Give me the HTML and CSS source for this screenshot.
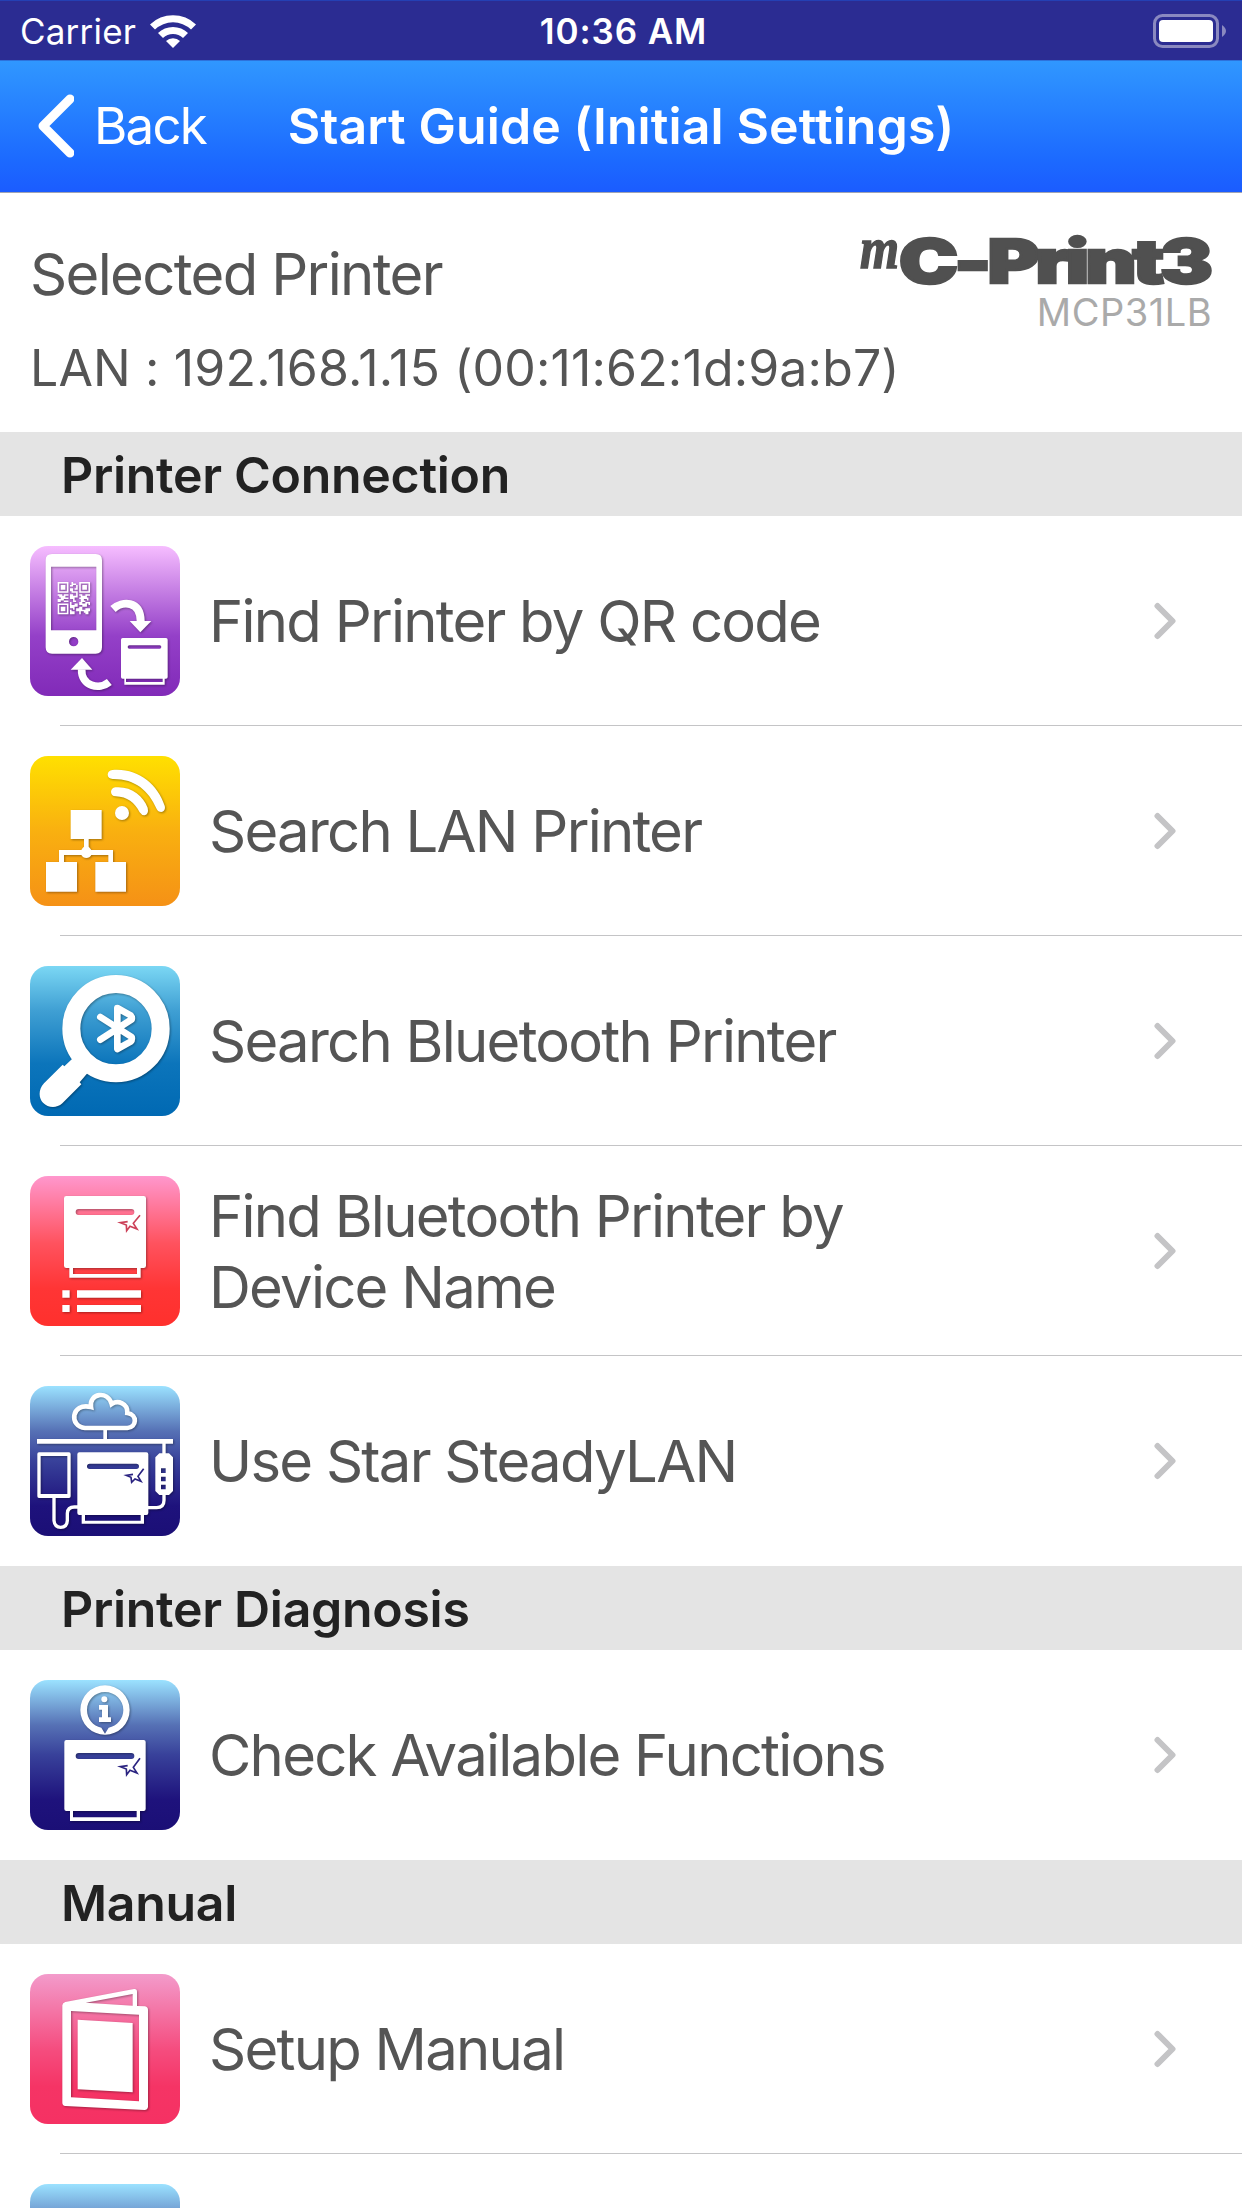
FILE: index.html
```html
<!DOCTYPE html>
<html lang="en">
<head>
    <meta charset="UTF-8">
    <meta name="viewport" content="width=device-width, initial-scale=1.0">
    <title>Start Guide (Initial Settings)</title>
    <link rel="stylesheet" href="styles.css">
</head>
<body>

<div class="statusbar">
    <div class="carrier">
        <span>Carrier</span>
        <svg class="wifi" viewBox="0 0 46 34">
            <path d="M0 10.500A33 33 0 0 1 46 10.500L41 15.500A26 26 0 0 0 5 15.500Z"/>
            <path d="M8 19A21.500 21.500 0 0 1 38 19L33 24A14.500 14.500 0 0 0 13 24Z"/>
            <path d="M16 27A10 10 0 0 1 30 27L23 34Z"/>
        </svg>
    </div>
    <div class="clock">10:36 AM</div>
    <div class="battery">
        <svg viewBox="0 0 74 34">
            <rect x="1.500" y="1.500" width="63" height="31" rx="8" fill="none" stroke="#8a89c0" stroke-width="3"/>
            <rect x="6" y="6" width="54" height="22" rx="4" fill="#fff"/>
            <path d="M69 11q4 3 4 6t-4 6z" fill="#8a89c0"/>
        </svg>
    </div>
</div>

<div class="navbar">
    <a class="back" href="#">
        <svg viewBox="0 0 36 64"><path d="M32 5L5 32L32 59"/></svg>
        <span>Back</span>
    </a>
    <h1>Start Guide (Initial Settings)</h1>
</div>

<div class="printer">
    <div class="printer-top">
        <div class="printer-title">Selected Printer</div>
        <div class="model">
            <svg class="logo" viewBox="0 0 352 50">
                <text class="logo-m" x="0" y="33" textLength="39" lengthAdjust="spacingAndGlyphs">m</text>
                <text class="logo-name" x="39" y="48" textLength="310" lengthAdjust="spacingAndGlyphs">C-Print3</text>
            </svg>
            <div class="model-name">MCP31LB</div>
        </div>
    </div>
    <div class="address">LAN : 192.168.1.15 (00:11:62:1d:9a:b7)</div>
</div>

<div class="section">
    <h2>Printer Connection</h2>
    <a class="row" href="#">
        <svg class="icon" viewBox="30 30 450 450">
            <defs>
                <linearGradient id="purple" x2="0" y2="1">
                    <stop offset="0" stop-color="#f6bdff"/>
                    <stop offset=".6" stop-color="#9440c8"/>
                    <stop offset="1" stop-color="#812ab8"/>
                </linearGradient>
            </defs>
            <rect x="30" y="30" width="450" height="450" rx="54" fill="url(#purple)"/>
            <g class="art">
                <path fill-rule="evenodd" d="M96 54H227Q246 54 246 73V334Q246 353 227 353H96Q77 353 77 334V73Q77 54 96 54ZM93 92V283H229V92ZM161 303A14 14 0 1 0 161 331A14 14 0 1 0 161 303Z"/>
                <g transform="translate(113 138) scale(4.620)">
                    <path fill-rule="evenodd" d="M0 0h7v7h-7zM1 1v5h5v-5zM2 2h3v3h-3zM14 0h7v7h-7zM15 1v5h5v-5zM16 2h3v3h-3zM0 14h7v7h-7zM1 15v5h5v-5zM2 16h3v3h-3z"/>
                    <path d="M9 0h1v1h2v1h-2v1h-2v-1h1zM12 2h1v3h-2v-1h1zM8 4h2v2h2v1h-3v-1h-1zM12 6h1v2h-1zM0 8h3v1h1v-1h3v1h-2v1h2v1h-3v1h3v1h-3v-1h-2v1h-2v-2h2v-1h-1v-1h-1zM8 8h2v1h2v-1h1v2h-2v2h1v1h-2v-2h-2zM14 8h2v1h2v-1h3v1h-2v1h1v2h-1v-1h-2v1h1v1h-3v-2h-1v-1h1v-1h-1zM8 13h1v2h2v-1h2v2h-2v2h-1v-1h-2zM14 13h2v1h2v-1h3v2h-1v-1h-1v2h-3v-1h-2zM12 17h2v-1h2v2h2v-1h3v2h-1v2h-2v-1h-1v-1h-2v2h-1v-2h-2zM8 18h1v1h2v2h-3z"/>
                </g>
                <path class="line" stroke-width="24" d="M279 219C306 195 361 192 362 255"/>
                <path d="M329 255H394L361 289Z"/>
                <path class="line" stroke-width="23" d="M268 438C238 463 183 450 185 400"/>
                <path d="M152 401H217L186 366Z"/>
                <path fill-rule="evenodd" d="M308 306H438Q443 306 443 311V423Q443 428 438 428H434V446H313V428H308Q303 428 303 423V311Q303 306 308 306ZM328 328A5 5 0 0 0 328 338H419A5 5 0 0 0 419 328ZM318 428V438H428V428Z"/>
            </g>
        </svg>
        <span class="label">Find Printer by QR code</span>
        <svg class="chevron" viewBox="0 0 22 38"><path d="M3.500 4L18.500 19L3.500 34"/></svg>
    </a>
    <a class="row" href="#">
        <svg class="icon" viewBox="30 30 450 450">
            <defs>
                <linearGradient id="yellow" x2="0" y2="1">
                    <stop offset="0" stop-color="#ffe000"/>
                    <stop offset=".5" stop-color="#f9b010"/>
                    <stop offset="1" stop-color="#f59116"/>
                </linearGradient>
            </defs>
            <rect x="30" y="30" width="450" height="450" rx="54" fill="url(#yellow)"/>
            <g class="art">
                <path d="M152 192H245V279H206V302Q211 307 214 312H279V348H318V437H226V348H265V327H214A17 17 0 0 1 184 327H132V348H171V437H78V348H117V312H184Q187 306 192 302V279H152Z"/>
                <circle cx="306" cy="201" r="21"/>
                <path d="M286 124C333 120 369 148 383 185Q387 204 374 208Q366 209 359 199C344 170 322 152 287 151Q273 149 273 137Q274 126 286 124Z"/>
                <path d="M277 72C352 65 413 114 434 179Q438 194 424 198Q414 198 410 189C386 133 344 98 278 99Q264 97 263 86Q264 74 277 72Z"/>
            </g>
        </svg>
        <span class="label">Search LAN Printer</span>
        <svg class="chevron" viewBox="0 0 22 38"><path d="M3.500 4L18.500 19L3.500 34"/></svg>
    </a>
    <a class="row" href="#">
        <svg class="icon" viewBox="30 30 450 450">
            <defs>
                <linearGradient id="sky" x2="0" y2="1">
                    <stop offset="0" stop-color="#7bd7f4"/>
                    <stop offset=".3" stop-color="#3f9fd3"/>
                    <stop offset=".65" stop-color="#0c75bb"/>
                    <stop offset="1" stop-color="#0069b3"/>
                </linearGradient>
            </defs>
            <rect x="30" y="30" width="450" height="450" rx="54" fill="url(#sky)"/>
            <g class="art">
                <circle class="line" cx="288" cy="218" r="134" stroke-width="54"/>
                <path d="M157 308L133 331L128 326L72 382C54 402 56 426 69 440C84 456 109 458 127 442L184 385L179 379L202 352Z"/>
                <path class="line round" stroke-width="20" d="M241 183L335 243Q337 252 332 257L292 279V156L332 178Q337 184 335 190L241 251"/>
            </g>
        </svg>
        <span class="label">Search Bluetooth Printer</span>
        <svg class="chevron" viewBox="0 0 22 38"><path d="M3.500 4L18.500 19L3.500 34"/></svg>
    </a>
    <a class="row" href="#">
        <svg class="icon" viewBox="30 30 450 450">
            <defs>
                <linearGradient id="red" x2="0" y2="1">
                    <stop offset="0" stop-color="#ff97cd"/>
                    <stop offset=".45" stop-color="#ff525e"/>
                    <stop offset=".75" stop-color="#ff3535"/>
                    <stop offset="1" stop-color="#ff302d"/>
                </linearGradient>
            </defs>
            <rect x="30" y="30" width="450" height="450" rx="54" fill="url(#red)"/>
            <g class="art">
                <path fill-rule="evenodd" d="M139 90H371Q378 90 378 97V299Q378 306 371 306H362V335H148V306H139Q132 306 132 299V97Q132 90 139 90ZM176 129A9 9 0 0 0 176 147H334A9 9 0 0 0 334 129ZM159 306V324H351V306Z"/>
                <path d="M127 373H149V395H127ZM171 373H363V395H171ZM127 417H149V438H127ZM171 417H363V438H171Z"/>
            </g>
            <path class="star" stroke="#cc4058" d="M323 167L301 170L319 177L320 194L330 181L351 189L340 172L360 148"/>
        </svg>
        <span class="label">Find Bluetooth Printer by Device Name</span>
        <svg class="chevron" viewBox="0 0 22 38"><path d="M3.500 4L18.500 19L3.500 34"/></svg>
    </a>
    <a class="row" href="#">
        <svg class="icon" viewBox="30 30 450 450">
            <defs>
                <linearGradient id="navy" x2="0" y2="1">
                    <stop offset="0" stop-color="#9be2ff"/>
                    <stop offset=".3" stop-color="#5671b5"/>
                    <stop offset=".5" stop-color="#38419a"/>
                    <stop offset=".8" stop-color="#1e127c"/>
                    <stop offset="1" stop-color="#1b0f76"/>
                </linearGradient>
            </defs>
            <rect x="30" y="30" width="450" height="450" rx="54" fill="url(#navy)"/>
            <g class="art">
                <path class="line" stroke-width="14" d="M195 156H322C350 154 354 116 322 111C324 82 294 72 275 84C264 42 206 52 213 93C153 78 146 152 195 156Z"/>
                <path d="M51 189H459V203H51ZM250 160H261V192H250ZM427 200H437V238H427Z"/>
                <path fill-rule="evenodd" d="M57 229H147Q152 229 152 234V361Q152 366 147 366H57Q52 366 52 361V234Q52 229 57 229ZM62 240V354H142V240Z"/>
                <path class="line" stroke-width="10" d="M102 362V434Q104 454 122 454Q141 454 142 434V412Q143 393 163 393H175"/>
                <path class="line" stroke-width="10" d="M382 395H410Q432 395 432 373V350"/>
                <path fill-rule="evenodd" d="M178 229H379Q385 229 385 235V411Q385 417 379 417H372V443H185V417H178Q172 417 172 411V235Q172 229 178 229ZM209 263A8 8 0 0 0 209 279H349A8 8 0 0 0 349 263ZM195 417V434H362V417Z"/>
                <path fill-rule="evenodd" d="M418 232H447L459 244V345L447 357H418L406 345V244ZM423 277V291H437V277ZM423 302V316H437V302ZM423 326V340H437V326Z"/>
            </g>
            <path class="star" stroke="#2a2380" d="M339 295L319 298L333 304L335 319L345 309L363 316L354 301L371 278"/>
        </svg>
        <span class="label">Use Star SteadyLAN</span>
        <svg class="chevron" viewBox="0 0 22 38"><path d="M3.500 4L18.500 19L3.500 34"/></svg>
    </a>
</div>

<div class="section">
    <h2>Printer Diagnosis</h2>
    <a class="row" href="#">
        <svg class="icon" viewBox="30 30 450 450">
            <rect x="30" y="30" width="450" height="450" rx="54" fill="url(#navy)"/>
            <g class="art">
                <path fill-rule="evenodd" d="M255 46A74 74 0 0 1 255 194A74 74 0 0 1 255 46ZM255 66C225 66 201 90 201 120C201 147 219 168 244 173L255 191L266 173C291 168 310 147 310 120C310 90 285 66 255 66Z"/>
                <circle cx="253" cy="88" r="9"/>
                <path d="M237 105H264V142H273V156H237V142H246V119H237Z"/>
                <path fill-rule="evenodd" d="M139 210H371Q377 210 377 216V417Q377 423 371 423H360V453H150V423H139Q133 423 133 417V216Q133 210 139 210ZM176 249A9 9 0 0 0 176 267H334A9 9 0 0 0 334 249ZM159 423V442H350V423Z"/>
            </g>
            <path class="star" stroke="#2a2380" d="M323 287L301 290L319 297L320 314L330 301L351 309L340 292L360 265"/>
        </svg>
        <span class="label">Check Available Functions</span>
        <svg class="chevron" viewBox="0 0 22 38"><path d="M3.500 4L18.500 19L3.500 34"/></svg>
    </a>
</div>

<div class="section">
    <h2>Manual</h2>
    <a class="row" href="#">
        <svg class="icon" viewBox="30 30 450 450">
            <defs>
                <linearGradient id="pink" x2="0" y2="1">
                    <stop offset="0" stop-color="#f39bcb"/>
                    <stop offset=".5" stop-color="#f54d7f"/>
                    <stop offset=".75" stop-color="#f53465"/>
                    <stop offset="1" stop-color="#f53163"/>
                </linearGradient>
            </defs>
            <rect x="30" y="30" width="450" height="450" rx="54" fill="url(#pink)"/>
            <g class="art">
                <path fill-rule="evenodd" d="M136 114L342 75Q351 74 351 83V126L375 127Q384 129 384 138V429Q382 438 374 438L136 426Q127 425 127 416V124Q128 116 136 114ZM338 90L197 116L338 125ZM153 141V400L357 412V152Z"/>
                <path d="M173 167L338 177V385L173 376Z"/>
            </g>
        </svg>
        <span class="label">Setup Manual</span>
        <svg class="chevron" viewBox="0 0 22 38"><path d="M3.500 4L18.500 19L3.500 34"/></svg>
    </a>
    <a class="row" href="#">
        <svg class="icon" viewBox="30 30 450 450">
            <rect x="30" y="30" width="450" height="450" rx="54" fill="url(#navy)"/>
        </svg>
    </a>
</div>

</body>
</html>
```

FILE: styles.css
```css
body {
    font-family: Inter, "Liberation Sans", sans-serif;
    margin: 0;
    padding: 0;
    height: 2208px;
    overflow: hidden;
    background-color: #fff;
    color: #555;
}
a {
    color: inherit;
    text-decoration: none;
}
.statusbar {
    box-sizing: border-box;
    height: 60px;
    padding: 1px 15px 0 20px;
    display: grid;
    grid-template-columns: 1fr auto 1fr;
    align-items: center;
    background-color: #2b2c92;
    border-top: 1px solid #2440b4;
    color: white;
    font-size: 35px;
}
.carrier {
    display: flex;
    align-items: center;
    gap: 14px;
    letter-spacing: 0.2px;
}
.wifi {
    width: 46px;
    height: 40px;
    fill: white;
}
.clock {
    font-weight: 600;
    letter-spacing: 0.9px;
}
.battery {
    display: flex;
    justify-content: flex-end;
}
.battery svg {
    width: 74px;
    height: 40px;
}
.navbar {
    box-sizing: border-box;
    height: 133px;
    padding: 0 38px 2px;
    display: grid;
    grid-template-columns: 1fr auto 1fr;
    align-items: center;
    background: linear-gradient(#3097ff, #1c6aff 75%, #1b5cff);
    border-top: 1px solid #2d72dc;
    border-bottom: 1px solid #a0a4b4;
    color: white;
}
.back {
    display: flex;
    align-items: center;
    gap: 20px;
    font-size: 51px;
    letter-spacing: -1.8px;
}
.back svg {
    width: 36px;
    height: 64px;
    fill: none;
    stroke: white;
    stroke-width: 9;
    stroke-linecap: round;
    stroke-linejoin: round;
}
.navbar h1 {
    margin: 0;
    font-size: 50px;
    font-weight: 600;
    letter-spacing: 0.1px;
}
.printer {
    box-sizing: border-box;
    height: 239px;
    padding: 42px 30px 0;
}
.printer-top {
    display: flex;
    justify-content: space-between;
    height: 94px;
}
.printer-title {
    font-size: 58px;
    line-height: 78px;
    letter-spacing: -1.65px;
}
.model {
    display: flex;
    flex-direction: column;
    align-items: flex-end;
    gap: 5px;
}
.logo {
    width: 352px;
    height: 50px;
    flex: none;
    overflow: visible;
    fill: #505050;
}
.logo-m {
    font-family: "Liberation Serif", serif;
    font-size: 60px;
    font-weight: bold;
    font-style: italic;
    stroke: #505050;
    stroke-width: 1.5;
}
.logo-name {
    font-family: Inter, sans-serif;
    font-size: 60px;
    font-weight: 900;
    letter-spacing: -3px;
    stroke: #505050;
    stroke-width: 2.5;
}
.model-name {
    color: #aaa;
    font-size: 38px;
    line-height: 44px;
    letter-spacing: 0.5px;
}
.address {
    font-size: 50px;
    line-height: 78px;
    letter-spacing: 0.15px;
}
.section h2 {
    box-sizing: border-box;
    margin: 0;
    padding: 1px 0 0 61px;
    background-color: #e4e4e4;
    color: #222;
    font-size: 50px;
    font-weight: 600;
    line-height: 84px;
    letter-spacing: -0.3px;
    height: 84px;
}
.row {
    height: 210px;
    box-sizing: border-box;
    padding: 0 66px 0 30px;
    display: flex;
    align-items: center;
    background: linear-gradient(#c4c4c6, #c4c4c6) 60px 100% / 100% 1px no-repeat;
}
.row:last-child {
    background: none;
}
.icon {
    width: 150px;
    height: 150px;
    flex: none;
}
.art {
    fill: white;
    filter: drop-shadow(3px 3px 3px rgba(0, 0, 0, 0.35));
}
.line {
    fill: none;
    stroke: white;
}
.round {
    stroke-linecap: round;
    stroke-linejoin: round;
}
.star {
    fill: none;
    stroke-width: 5;
}
.label {
    flex: 1;
    margin-left: 29px;
    padding: 1px 180px 0 0;
    font-size: 58px;
    line-height: 71px;
    letter-spacing: -1.75px;
}
.chevron {
    width: 22px;
    height: 38px;
    fill: none;
    stroke: #c4c4c6;
    stroke-width: 6;
    stroke-linecap: round;
    stroke-linejoin: round;
}
```
